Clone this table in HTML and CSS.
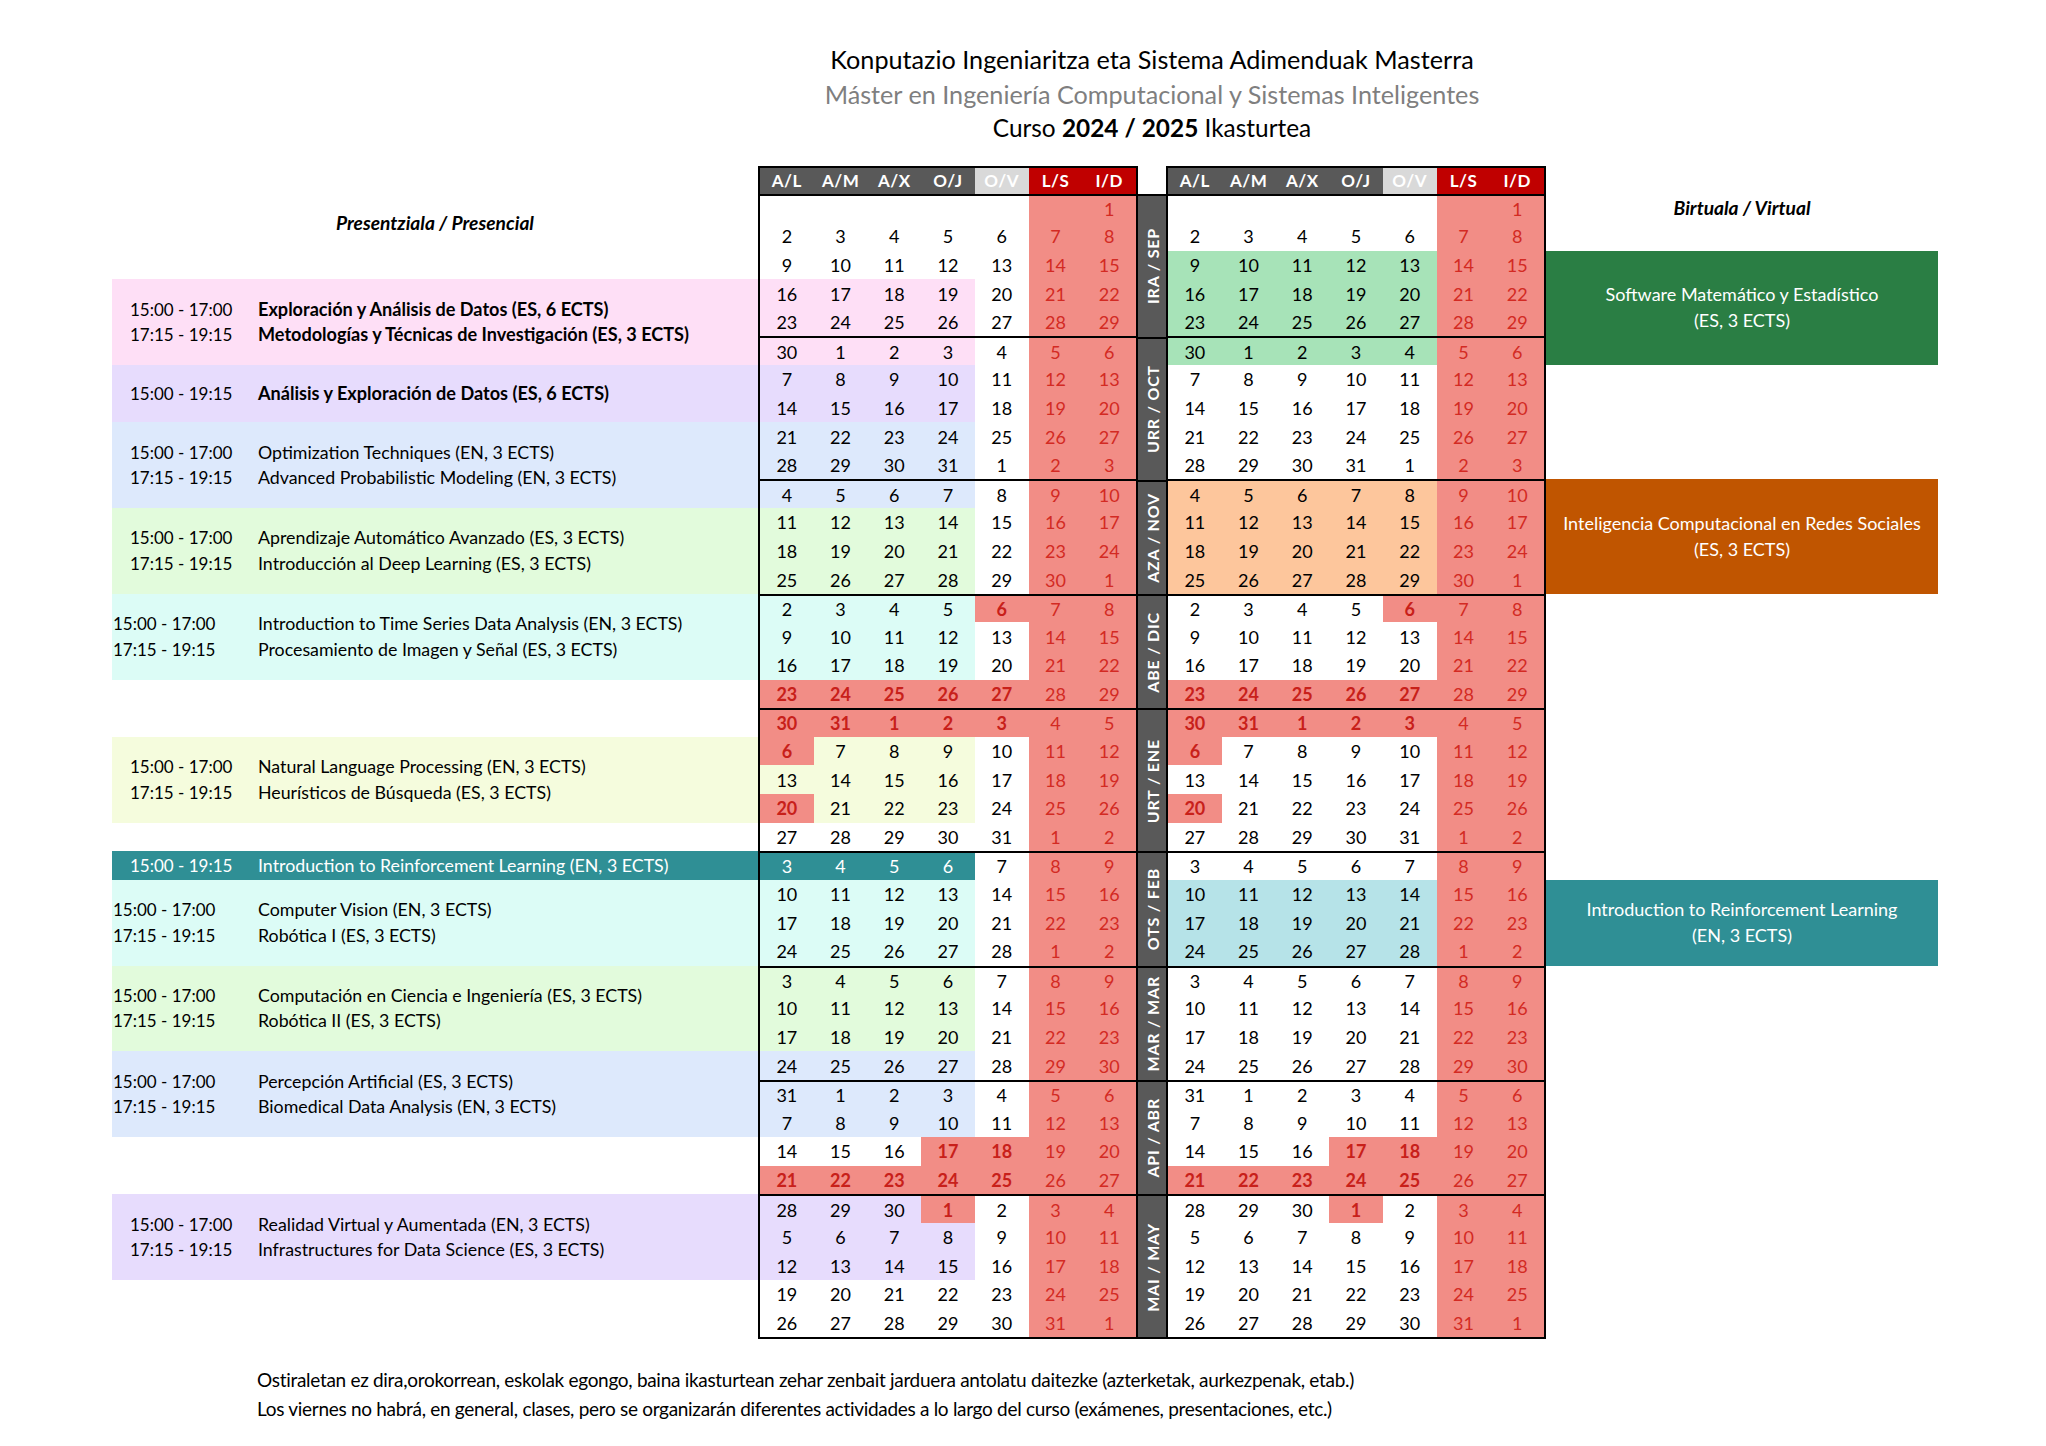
FILE: index.html
```html
<!DOCTYPE html>
<html lang="es">
<head>
<meta charset="utf-8">
<title>Calendario 2024 / 2025</title>
<link rel="stylesheet" href="styles.css">
</head>
<body>
<header class="title">
  <div class="t1">Konputazio Ingeniaritza eta Sistema Adimenduak Masterra</div>
  <div class="t2">Máster en Ingeniería Computacional y Sistemas Inteligentes</div>
  <div class="t3">Curso <b>2024 / 2025</b> Ikasturtea</div>
</header>

<main class="board">
  <section class="panel left">
    <div class="phead b-head">Presentziala / Presencial</div>
    <div class="blk a pink b-pink"><p><span class="tm">15:00 - 17:00</span><b>Exploración y Análisis de Datos (ES, 6 ECTS)</b></p><p><span class="tm">17:15 - 19:15</span><b>Metodologías y Técnicas de Investigación (ES, 3 ECTS)</b></p></div>
    <div class="blk a lav b-lav"><p><span class="tm">15:00 - 19:15</span><b>Análisis y Exploración de Datos (ES, 6 ECTS)</b></p></div>
    <div class="blk a blue b-blue"><p><span class="tm">15:00 - 17:00</span><span class="cn">Optimization Techniques (EN, 3 ECTS)</span></p><p><span class="tm">17:15 - 19:15</span><span class="cn">Advanced Probabilistic Modeling (EN, 3 ECTS)</span></p></div>
    <div class="blk a green b-green"><p><span class="tm">15:00 - 17:00</span><span class="cn">Aprendizaje Automático Avanzado (ES, 3 ECTS)</span></p><p><span class="tm">17:15 - 19:15</span><span class="cn">Introducción al Deep Learning (ES, 3 ECTS)</span></p></div>
    <div class="blk bb cyan b-cyan"><p><span class="tm">15:00 - 17:00</span><span class="cn">Introduction to Time Series Data Analysis (EN, 3 ECTS)</span></p><p><span class="tm">17:15 - 19:15</span><span class="cn">Procesamiento de Imagen y Señal (ES, 3 ECTS)</span></p></div>
    <div class="blk a yellow b-yellow"><p><span class="tm">15:00 - 17:00</span><span class="cn">Natural Language Processing (EN, 3 ECTS)</span></p><p><span class="tm">17:15 - 19:15</span><span class="cn">Heurísticos de Búsqueda (ES, 3 ECTS)</span></p></div>
    <div class="blk a teal b-teal"><p><span class="tm">15:00 - 19:15</span><span class="cn">Introduction to Reinforcement Learning (EN, 3 ECTS)</span></p></div>
    <div class="blk bb cyan b-cyan2"><p><span class="tm">15:00 - 17:00</span><span class="cn">Computer Vision (EN, 3 ECTS)</span></p><p><span class="tm">17:15 - 19:15</span><span class="cn">Robótica I (ES, 3 ECTS)</span></p></div>
    <div class="blk bb green b-green2"><p><span class="tm">15:00 - 17:00</span><span class="cn">Computación en Ciencia e Ingeniería (ES, 3 ECTS)</span></p><p><span class="tm">17:15 - 19:15</span><span class="cn">Robótica II (ES, 3 ECTS)</span></p></div>
    <div class="blk bb blue b-blue2"><p><span class="tm">15:00 - 17:00</span><span class="cn">Percepción Artificial (ES, 3 ECTS)</span></p><p><span class="tm">17:15 - 19:15</span><span class="cn">Biomedical Data Analysis (EN, 3 ECTS)</span></p></div>
    <div class="blk a lav b-lav2"><p><span class="tm">15:00 - 17:00</span><span class="cn">Realidad Virtual y Aumentada (EN, 3 ECTS)</span></p><p><span class="tm">17:15 - 19:15</span><span class="cn">Infrastructures for Data Science (ES, 3 ECTS)</span></p></div>
  </section>

  <section class="cal">
    <div class="wk hd"><span>A/L</span><span>A/M</span><span>A/X</span><span>O/J</span><span class="fr">O/V</span><span>L/S</span><span>I/D</span></div>
    <div class="wk m"><span></span><span></span><span></span><span></span><span></span><span></span><span>1</span></div>
    <div class="wk"><span>2</span><span>3</span><span>4</span><span>5</span><span>6</span><span>7</span><span>8</span></div>
    <div class="wk"><span>9</span><span>10</span><span>11</span><span>12</span><span>13</span><span>14</span><span>15</span></div>
    <div class="wk lp"><span>16</span><span>17</span><span>18</span><span>19</span><span>20</span><span>21</span><span>22</span></div>
    <div class="wk lp"><span>23</span><span>24</span><span>25</span><span>26</span><span>27</span><span>28</span><span>29</span></div>
    <div class="wk m lp"><span>30</span><span>1</span><span>2</span><span>3</span><span>4</span><span>5</span><span>6</span></div>
    <div class="wk ll"><span>7</span><span>8</span><span>9</span><span>10</span><span>11</span><span>12</span><span>13</span></div>
    <div class="wk ll"><span>14</span><span>15</span><span>16</span><span>17</span><span>18</span><span>19</span><span>20</span></div>
    <div class="wk lb"><span>21</span><span>22</span><span>23</span><span>24</span><span>25</span><span>26</span><span>27</span></div>
    <div class="wk lb"><span>28</span><span>29</span><span>30</span><span>31</span><span>1</span><span>2</span><span>3</span></div>
    <div class="wk m lb"><span>4</span><span>5</span><span>6</span><span>7</span><span>8</span><span>9</span><span>10</span></div>
    <div class="wk lg"><span>11</span><span>12</span><span>13</span><span>14</span><span>15</span><span>16</span><span>17</span></div>
    <div class="wk lg"><span>18</span><span>19</span><span>20</span><span>21</span><span>22</span><span>23</span><span>24</span></div>
    <div class="wk lg"><span>25</span><span>26</span><span>27</span><span>28</span><span>29</span><span>30</span><span>1</span></div>
    <div class="wk m lc"><span>2</span><span>3</span><span>4</span><span>5</span><span class="h">6</span><span>7</span><span>8</span></div>
    <div class="wk lc"><span>9</span><span>10</span><span>11</span><span>12</span><span>13</span><span>14</span><span>15</span></div>
    <div class="wk lc"><span>16</span><span>17</span><span>18</span><span>19</span><span>20</span><span>21</span><span>22</span></div>
    <div class="wk"><span class="h">23</span><span class="h">24</span><span class="h">25</span><span class="h">26</span><span class="h">27</span><span>28</span><span>29</span></div>
    <div class="wk m"><span class="h">30</span><span class="h">31</span><span class="h">1</span><span class="h">2</span><span class="h">3</span><span>4</span><span>5</span></div>
    <div class="wk ly"><span class="h">6</span><span>7</span><span>8</span><span>9</span><span>10</span><span>11</span><span>12</span></div>
    <div class="wk ly"><span>13</span><span>14</span><span>15</span><span>16</span><span>17</span><span>18</span><span>19</span></div>
    <div class="wk ly"><span class="h">20</span><span>21</span><span>22</span><span>23</span><span>24</span><span>25</span><span>26</span></div>
    <div class="wk"><span>27</span><span>28</span><span>29</span><span>30</span><span>31</span><span>1</span><span>2</span></div>
    <div class="wk m lt"><span>3</span><span>4</span><span>5</span><span>6</span><span>7</span><span>8</span><span>9</span></div>
    <div class="wk lc"><span>10</span><span>11</span><span>12</span><span>13</span><span>14</span><span>15</span><span>16</span></div>
    <div class="wk lc"><span>17</span><span>18</span><span>19</span><span>20</span><span>21</span><span>22</span><span>23</span></div>
    <div class="wk lc"><span>24</span><span>25</span><span>26</span><span>27</span><span>28</span><span>1</span><span>2</span></div>
    <div class="wk m lg"><span>3</span><span>4</span><span>5</span><span>6</span><span>7</span><span>8</span><span>9</span></div>
    <div class="wk lg"><span>10</span><span>11</span><span>12</span><span>13</span><span>14</span><span>15</span><span>16</span></div>
    <div class="wk lg"><span>17</span><span>18</span><span>19</span><span>20</span><span>21</span><span>22</span><span>23</span></div>
    <div class="wk lb"><span>24</span><span>25</span><span>26</span><span>27</span><span>28</span><span>29</span><span>30</span></div>
    <div class="wk m lb"><span>31</span><span>1</span><span>2</span><span>3</span><span>4</span><span>5</span><span>6</span></div>
    <div class="wk lb"><span>7</span><span>8</span><span>9</span><span>10</span><span>11</span><span>12</span><span>13</span></div>
    <div class="wk"><span>14</span><span>15</span><span>16</span><span class="h">17</span><span class="h">18</span><span>19</span><span>20</span></div>
    <div class="wk"><span class="h">21</span><span class="h">22</span><span class="h">23</span><span class="h">24</span><span class="h">25</span><span>26</span><span>27</span></div>
    <div class="wk m ll"><span>28</span><span>29</span><span>30</span><span class="h">1</span><span>2</span><span>3</span><span>4</span></div>
    <div class="wk ll"><span>5</span><span>6</span><span>7</span><span>8</span><span>9</span><span>10</span><span>11</span></div>
    <div class="wk ll"><span>12</span><span>13</span><span>14</span><span>15</span><span>16</span><span>17</span><span>18</span></div>
    <div class="wk"><span>19</span><span>20</span><span>21</span><span>22</span><span>23</span><span>24</span><span>25</span></div>
    <div class="wk"><span>26</span><span>27</span><span>28</span><span>29</span><span>30</span><span>31</span><span>1</span></div>
  </section>

  <section class="months">
    <div class="mo n5"><span>IRA / SEP</span></div>
    <div class="mo n5"><span>URR / OCT</span></div>
    <div class="mo n4"><span>AZA / NOV</span></div>
    <div class="mo n4"><span>ABE / DIC</span></div>
    <div class="mo n5"><span>URT / ENE</span></div>
    <div class="mo n4"><span>OTS / FEB</span></div>
    <div class="mo n4"><span>MAR / MAR</span></div>
    <div class="mo n4"><span>API / ABR</span></div>
    <div class="mo n5 last"><span>MAI / MAY</span></div>
  </section>

  <section class="cal">
    <div class="wk hd"><span>A/L</span><span>A/M</span><span>A/X</span><span>O/J</span><span class="fr">O/V</span><span>L/S</span><span>I/D</span></div>
    <div class="wk m"><span></span><span></span><span></span><span></span><span></span><span></span><span>1</span></div>
    <div class="wk"><span>2</span><span>3</span><span>4</span><span>5</span><span>6</span><span>7</span><span>8</span></div>
    <div class="wk rg"><span>9</span><span>10</span><span>11</span><span>12</span><span>13</span><span>14</span><span>15</span></div>
    <div class="wk rg"><span>16</span><span>17</span><span>18</span><span>19</span><span>20</span><span>21</span><span>22</span></div>
    <div class="wk rg"><span>23</span><span>24</span><span>25</span><span>26</span><span>27</span><span>28</span><span>29</span></div>
    <div class="wk m rg"><span>30</span><span>1</span><span>2</span><span>3</span><span>4</span><span>5</span><span>6</span></div>
    <div class="wk"><span>7</span><span>8</span><span>9</span><span>10</span><span>11</span><span>12</span><span>13</span></div>
    <div class="wk"><span>14</span><span>15</span><span>16</span><span>17</span><span>18</span><span>19</span><span>20</span></div>
    <div class="wk"><span>21</span><span>22</span><span>23</span><span>24</span><span>25</span><span>26</span><span>27</span></div>
    <div class="wk"><span>28</span><span>29</span><span>30</span><span>31</span><span>1</span><span>2</span><span>3</span></div>
    <div class="wk m ro"><span>4</span><span>5</span><span>6</span><span>7</span><span>8</span><span>9</span><span>10</span></div>
    <div class="wk ro"><span>11</span><span>12</span><span>13</span><span>14</span><span>15</span><span>16</span><span>17</span></div>
    <div class="wk ro"><span>18</span><span>19</span><span>20</span><span>21</span><span>22</span><span>23</span><span>24</span></div>
    <div class="wk ro"><span>25</span><span>26</span><span>27</span><span>28</span><span>29</span><span>30</span><span>1</span></div>
    <div class="wk m"><span>2</span><span>3</span><span>4</span><span>5</span><span class="h">6</span><span>7</span><span>8</span></div>
    <div class="wk"><span>9</span><span>10</span><span>11</span><span>12</span><span>13</span><span>14</span><span>15</span></div>
    <div class="wk"><span>16</span><span>17</span><span>18</span><span>19</span><span>20</span><span>21</span><span>22</span></div>
    <div class="wk"><span class="h">23</span><span class="h">24</span><span class="h">25</span><span class="h">26</span><span class="h">27</span><span>28</span><span>29</span></div>
    <div class="wk m"><span class="h">30</span><span class="h">31</span><span class="h">1</span><span class="h">2</span><span class="h">3</span><span>4</span><span>5</span></div>
    <div class="wk"><span class="h">6</span><span>7</span><span>8</span><span>9</span><span>10</span><span>11</span><span>12</span></div>
    <div class="wk"><span>13</span><span>14</span><span>15</span><span>16</span><span>17</span><span>18</span><span>19</span></div>
    <div class="wk"><span class="h">20</span><span>21</span><span>22</span><span>23</span><span>24</span><span>25</span><span>26</span></div>
    <div class="wk"><span>27</span><span>28</span><span>29</span><span>30</span><span>31</span><span>1</span><span>2</span></div>
    <div class="wk m"><span>3</span><span>4</span><span>5</span><span>6</span><span>7</span><span>8</span><span>9</span></div>
    <div class="wk rt"><span>10</span><span>11</span><span>12</span><span>13</span><span>14</span><span>15</span><span>16</span></div>
    <div class="wk rt"><span>17</span><span>18</span><span>19</span><span>20</span><span>21</span><span>22</span><span>23</span></div>
    <div class="wk rt"><span>24</span><span>25</span><span>26</span><span>27</span><span>28</span><span>1</span><span>2</span></div>
    <div class="wk m"><span>3</span><span>4</span><span>5</span><span>6</span><span>7</span><span>8</span><span>9</span></div>
    <div class="wk"><span>10</span><span>11</span><span>12</span><span>13</span><span>14</span><span>15</span><span>16</span></div>
    <div class="wk"><span>17</span><span>18</span><span>19</span><span>20</span><span>21</span><span>22</span><span>23</span></div>
    <div class="wk"><span>24</span><span>25</span><span>26</span><span>27</span><span>28</span><span>29</span><span>30</span></div>
    <div class="wk m"><span>31</span><span>1</span><span>2</span><span>3</span><span>4</span><span>5</span><span>6</span></div>
    <div class="wk"><span>7</span><span>8</span><span>9</span><span>10</span><span>11</span><span>12</span><span>13</span></div>
    <div class="wk"><span>14</span><span>15</span><span>16</span><span class="h">17</span><span class="h">18</span><span>19</span><span>20</span></div>
    <div class="wk"><span class="h">21</span><span class="h">22</span><span class="h">23</span><span class="h">24</span><span class="h">25</span><span>26</span><span>27</span></div>
    <div class="wk m"><span>28</span><span>29</span><span>30</span><span class="h">1</span><span>2</span><span>3</span><span>4</span></div>
    <div class="wk"><span>5</span><span>6</span><span>7</span><span>8</span><span>9</span><span>10</span><span>11</span></div>
    <div class="wk"><span>12</span><span>13</span><span>14</span><span>15</span><span>16</span><span>17</span><span>18</span></div>
    <div class="wk"><span>19</span><span>20</span><span>21</span><span>22</span><span>23</span><span>24</span><span>25</span></div>
    <div class="wk"><span>26</span><span>27</span><span>28</span><span>29</span><span>30</span><span>31</span><span>1</span></div>
  </section>

  <section class="panel right">
    <div class="phead r-head">Birtuala / Virtual</div>
    <div class="vblk dgreen r-green"><p>Software Matemático y Estadístico</p><p>(ES, 3 ECTS)</p></div>
    <div class="vblk dorange r-orange"><p>Inteligencia Computacional en Redes Sociales</p><p>(ES, 3 ECTS)</p></div>
    <div class="vblk dteal r-teal"><p>Introduction to Reinforcement Learning</p><p>(EN, 3 ECTS)</p></div>
  </section>
</main>

<footer class="notes">
  <p>Ostiraletan ez dira,orokorrean, eskolak egongo, baina ikasturtean zehar zenbait jarduera antolatu daitezke (azterketak, aurkezpenak, etab.)</p>
  <p>Los viernes no habrá, en general, clases, pero se organizarán diferentes actividades a lo largo del curso (exámenes, presentaciones, etc.)</p>
</footer>
</body>
</html>
```

FILE: styles.css
```css
* { box-sizing: border-box; }
body {
  margin: 0;
  background: #fff;
  color: #000;
  font-family: Lato, "Open Sans", "Liberation Sans", sans-serif;
}
p { margin: 0; }

/* Title */
.title {
  margin-left: 758px;
  width: 788px;
  padding-top: 42px;
  text-align: center;
  font-size: 25.2px;
  line-height: 34.5px;
}
.title .t2 { color: #7f7f7f; }
.title .t3 { font-size: 24.4px; }

/* Board */
.board {
  display: flex;
  align-items: flex-start;
  margin-top: 20px;
  margin-left: 112px;
}

.panel {
  display: grid;
  grid-template-rows: 28px repeat(40, 28.6px);
}
.panel.left { width: 646px; }
.panel.right { width: 392px; }

.phead {
  font-weight: 700;
  font-style: italic;
  font-size: 19.2px;
  display: flex;
  align-items: center;
  justify-content: center;
}
.b-head { grid-row: 2 / 4; }
.r-head { grid-row: 2 / 3; }

.blk {
  display: flex;
  flex-direction: column;
  justify-content: center;
  font-size: 17px;
  line-height: 25.5px;
}
.blk p { display: flex; align-items: baseline; white-space: nowrap; }
.blk.a { padding-left: 18px; }
.blk.a .tm { width: 128px; }
.blk.bb { padding-left: 1px; }
.blk.bb .tm { width: 145px; }
.blk .cn { font-size: 17.8px; }
.blk b { font-weight: 700; font-size: 18.1px; }

.pink { background: #fedff6; }
.lav { background: #e7dcfd; }
.blue { background: #dde9fc; }
.green { background: #e2fbdc; }
.cyan { background: #dcfcf6; }
.yellow { background: #f5fcdd; }
.teal { background: #2f8f95; color: #fff; }

.b-pink { grid-row: 5 / 8; }
.b-lav { grid-row: 8 / 10; }
.b-blue { grid-row: 10 / 13; }
.b-green { grid-row: 13 / 16; }
.b-cyan { grid-row: 16 / 19; }
.b-yellow { grid-row: 21 / 24; }
.b-teal { grid-row: 25 / 26; }
.b-cyan2 { grid-row: 26 / 29; }
.b-green2 { grid-row: 29 / 32; }
.b-blue2 { grid-row: 32 / 35; }
.b-lav2 { grid-row: 37 / 40; }

.vblk {
  display: flex;
  flex-direction: column;
  justify-content: center;
  align-items: center;
  color: #fff;
  font-size: 18px;
  line-height: 25.5px;
}
.dgreen { background: #2a7e44; }
.dorange { background: #c05500; }
.dteal { background: #2f8f95; }
.r-green { grid-row: 4 / 8; }
.r-orange { grid-row: 12 / 16; }
.r-teal { grid-row: 26 / 29; }

/* Calendars */
.cal {
  width: 380px;
  border: 2px solid #000;
}
.wk {
  display: grid;
  grid-template-columns: repeat(7, 1fr);
  height: 28.6px;
  font-size: 18px;
}
.wk.m { border-top: 2px solid #000; }
.wk > span {
  display: flex;
  align-items: center;
  justify-content: center;
}
.wk > span:nth-child(n+6) { background: #f28d86; color: #d32a23; }

.wk.hd { height: 26px; font-weight: 700; font-size: 17px; letter-spacing: 0.5px; }
.wk.hd > span { background: #595959; color: #fff; }
.wk.hd > span.fr { background: #d9d9d9; }
.wk.hd > span:nth-child(n+6) { background: #c00000; color: #fff; }

.wk.lp > span:nth-child(-n+4) { background: #fedff6; }
.wk.ll > span:nth-child(-n+4) { background: #e7dcfd; }
.wk.lb > span:nth-child(-n+4) { background: #dde9fc; }
.wk.lg > span:nth-child(-n+4) { background: #e2fbdc; }
.wk.lc > span:nth-child(-n+4) { background: #dcfcf6; }
.wk.ly > span:nth-child(-n+4) { background: #f5fcdd; }
.wk.lt > span:nth-child(-n+4) { background: #2f8f95; color: #fff; }
.wk.rg > span:nth-child(-n+5) { background: #a7e3b8; }
.wk.ro > span:nth-child(-n+5) { background: #fdc69c; }
.wk.rt > span:nth-child(-n+5) { background: #b6e3e8; }

.cal .wk > span.h { background: #f28d86; color: #c8201a; font-weight: 700; }

/* Month column */
.months {
  width: 28px;
  padding-top: 28px;
  display: flex;
  flex-direction: column;
}
.mo {
  background: #595959;
  border-top: 2px solid #000;
  display: flex;
  align-items: center;
  justify-content: center;
}
.mo.n5 { height: 143px; }
.mo.n4 { height: 114.4px; }
.mo.last { height: 145px; border-bottom: 2px solid #000; }
.mo span {
  writing-mode: vertical-rl;
  transform: rotate(180deg);
  color: #fff;
  font-weight: 700;
  font-size: 16px;
  letter-spacing: 0.8px;
  white-space: nowrap;
}

/* Footer */
.notes {
  margin-left: 257px;
  margin-top: 26px;
  font-size: 19px;
  line-height: 29px;
  letter-spacing: -0.3px;
}
```
